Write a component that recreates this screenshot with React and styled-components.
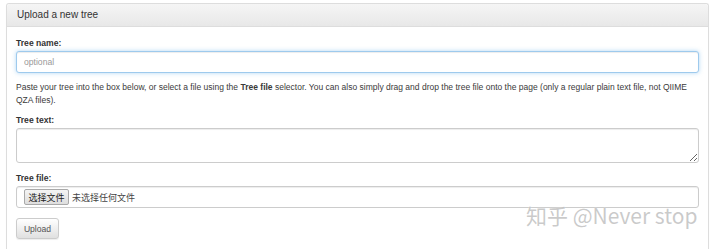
import React from 'react';
import styled, { createGlobalStyle } from 'styled-components';

const GlobalStyle = createGlobalStyle`
  html, body {
    margin: 0;
    padding: 0;
    background: #fff;
  }
  body {
    font-family: "Liberation Sans", Arial, "Noto Sans CJK SC", sans-serif;
    color: #333;
  }
`;

function App() {
  return (
    <>
      <GlobalStyle />
      <Page>
        <Panel>
          <PanelHeading>Upload a new tree</PanelHeading>
          <PanelBody>
            <FormGroup>
              <Label>Tree name:</Label>
              <TextInput placeholder="optional" focused />
            </FormGroup>
            <HelpText>
              Paste your tree into the box below, or select a file using the{' '}
              <strong>Tree file</strong> selector. You can also simply drag and
              drop the tree file onto the page (only a regular plain text file,
              not QIIME QZA files).
            </HelpText>
            <FormGroup $gap={9}>
              <Label>Tree text:</Label>
              <TextArea />
            </FormGroup>
            <FormGroup $gap={10}>
              <Label>Tree file:</Label>
              <FileBox>
                <ChooseButton type="button">选择文件</ChooseButton>
                <FileName>未选择任何文件</FileName>
              </FileBox>
            </FormGroup>
            <UploadButton type="button">Upload</UploadButton>
          </PanelBody>
        </Panel>
        <Watermark>知乎 @Never stop</Watermark>
      </Page>
    </>
  );
}

const Page = styled.div`
  position: relative;
  height: 249px;
  overflow: hidden;
  padding: 3px 11px 0 6px;
  box-sizing: border-box;
`;

const Panel = styled.div`
  border: 1px solid #ddd;
  border-bottom: none;
  border-radius: 3px 3px 0 0;
  height: 260px;
  box-shadow: 0 1px 1px rgba(0, 0, 0, 0.05);
`;

const PanelHeading = styled.div`
  height: 22px;
  line-height: 22px;
  padding: 0 10px;
  font-size: 10px;
  color: #333;
  background: linear-gradient(to bottom, #f5f5f5 0%, #e8e8e8 100%);
  border-bottom: 1px solid #ddd;
  border-radius: 3px 3px 0 0;
`;

const PanelBody = styled.div`
  padding: 10px 9px 0;
`;

const FormGroup = styled.div`
  margin-bottom: ${(props) => props.$gap ?? 8}px;
`;

const Label = styled.div`
  font-size: 8.6px;
  line-height: 12px;
  font-weight: bold;
  color: #333;
  margin-bottom: 2px;
`;

const TextInput = styled.input`
  display: block;
  width: 100%;
  height: 22px;
  box-sizing: border-box;
  padding: 0 7px;
  font-family: "Liberation Sans", Arial, sans-serif;
  font-size: 8.6px;
  color: #555;
  border: 1px solid ${(props) => (props.focused ? '#9ecaed' : '#ccc')};
  border-radius: 3px;
  box-shadow: ${(props) =>
    props.focused
      ? 'inset 0 1px 1px rgba(0,0,0,.075), 0 0 4px rgba(102,175,233,.5)'
      : 'inset 0 1px 1px rgba(0,0,0,.075)'};
  outline: none;

  &::placeholder {
    color: #999;
  }
`;

const HelpText = styled.p`
  margin: 0 0 7px;
  font-size: 8.5px;
  line-height: 13px;
  color: #3a3a3a;
`;

const TextArea = styled.textarea`
  display: block;
  width: 100%;
  height: 35px;
  box-sizing: border-box;
  border: 1px solid #ccc;
  border-radius: 3px;
  box-shadow: inset 0 1px 1px rgba(0, 0, 0, 0.075);
  resize: vertical;
  outline: none;
`;

const FileBox = styled.div`
  display: flex;
  align-items: center;
  height: 22px;
  box-sizing: border-box;
  padding: 0 7px;
  border: 1px solid #ccc;
  border-radius: 3px;
  box-shadow: inset 0 1px 1px rgba(0, 0, 0, 0.075);
`;

const ChooseButton = styled.button`
  height: 16px;
  width: 45px;
  padding: 0;
  font-family: "Noto Sans CJK SC", sans-serif;
  font-size: 9px;
  color: #222;
  background: linear-gradient(to bottom, #f4f4f4, #dedede);
  border: 1px solid #a9a9a9;
  border-radius: 2px;
`;

const FileName = styled.span`
  margin-left: 3px;
  font-family: "Noto Sans CJK SC", sans-serif;
  font-size: 9px;
  color: #444;
`;

const UploadButton = styled.button`
  display: block;
  width: 43px;
  height: 21px;
  padding: 0;
  font-family: "Liberation Sans", Arial, sans-serif;
  font-size: 8.6px;
  color: #555;
  background: linear-gradient(to bottom, #fff 0%, #e0e0e0 100%);
  border: 1px solid #ccc;
  border-radius: 3px;
  box-shadow: inset 0 1px 0 rgba(255, 255, 255, 0.15), 0 1px 1px rgba(0, 0, 0, 0.075);
`;

const Watermark = styled.div`
  position: absolute;
  left: 526px;
  top: 200px;
  font-family: "Noto Sans CJK SC", "Noto Sans", sans-serif;
  font-size: 21px;
  line-height: 30px;
  color: rgba(150, 150, 150, 0.5);
  text-shadow: 0 0 1px rgba(255, 255, 255, 0.9);
  white-space: nowrap;
`;

export default App;
